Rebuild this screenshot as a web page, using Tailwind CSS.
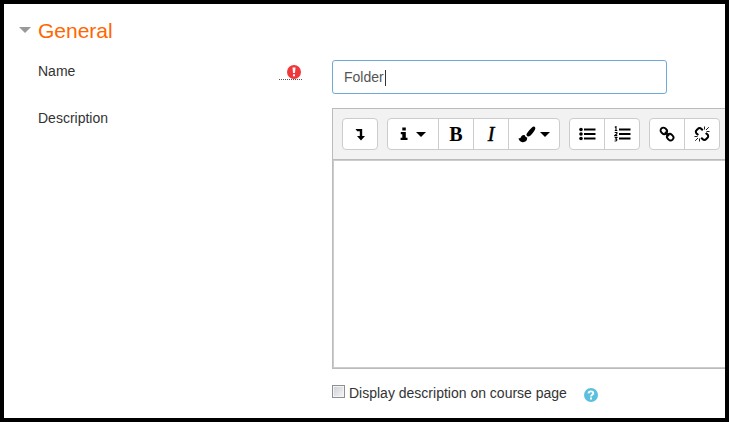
<!DOCTYPE html>
<html lang="en">
<head>
  <meta charset="UTF-8" />
  <meta name="viewport" content="width=device-width, initial-scale=1" />
  <title>Folder settings</title>
  <script src="https://cdn.jsdelivr.net/npm/@tailwindcss/browser@4"></script>
</head>
<body class="min-h-screen border-4 border-black bg-white pt-3 font-['Liberation_Sans',Arial,sans-serif] text-sm text-[#333] overflow-hidden">
  <form>
    <!-- Section header -->
    <h2>
      <button type="button" aria-expanded="true" class="flex items-center gap-[7px] pl-[15px] text-[21px] leading-[30px] text-[#ff6600]">
        <svg class="w-3 h-[30px]" viewBox="0 0 12 30" aria-hidden="true"><path d="M0 11h12l-6 6z" fill="#999" /></svg>
        General
      </button>
    </h2>

    <div class="mt-3.5 flex flex-col gap-3.5 pl-[34px]">
      <!-- Name -->
      <div class="flex">
        <div class="flex w-[294px] shrink-0 items-start justify-between pr-[30px] pt-px">
          <label for="name" class="leading-5">Name</label>
          <span class="mt-1 flex h-[15px] w-[23px] justify-end border-b border-dotted border-[#555]" title="Required">
            <svg class="size-[14px] mr-px" viewBox="0 0 14 14" aria-hidden="true">
              <circle cx="7" cy="7" r="7" fill="#f0383a" />
              <path d="M5.500 2.400h3L8 8H6zM6 9.200h2v2H6z" fill="#fff" />
            </svg>
          </span>
        </div>
        <div class="relative w-[335px]">
          <input id="name" type="text" value="Folder" class="block h-[34px] w-full rounded-[3px] border border-[#6fa9d8] px-[11px] text-sm text-[#555] outline-none" />
          <span class="absolute left-[53px] top-2.5 h-4 w-px bg-[#333]"></span>
        </div>
      </div>

      <!-- Description -->
      <div class="flex">
        <label for="description" class="w-[294px] shrink-0 leading-5">Description</label>
        <div class="min-w-0 grow border border-r-0 border-[#bbb]">
          <div class="flex gap-[9px] border-b border-[#bbb] bg-[#f2f2f2] p-[9px] pr-1 text-black">
            <button type="button" aria-label="Show more buttons" class="flex h-8 w-9 items-center justify-center rounded border border-[#ccc] bg-white">
              <svg class="size-4" viewBox="0 0 16 16" fill="currentColor"><path d="M3.500 3h6.700v7H13l-4 4.500L5 10h2.800V5.200H5.200z" /></svg>
            </button>

            <div class="flex h-8 divide-x divide-[#ccc] rounded border border-[#ccc] bg-white">
              <button type="button" aria-label="Paragraph styles" class="flex w-[51px] items-center justify-center gap-2">
                <svg class="h-4 w-2" viewBox="0 0 8 16" fill="currentColor"><path d="M2.300 1.500h3.500v3H2.300zM.8 6h5v5.800h1.700V14H.6v-2.200h1.700V8.200H.8z" /></svg>
                <svg class="h-4 w-[10px]" viewBox="0 0 10 16" fill="currentColor"><path d="M0 6h10l-5 5z" /></svg>
              </button>
              <button type="button" aria-label="Bold" class="flex w-[35px] items-center justify-center font-['Liberation_Serif',serif] text-xl font-bold">B</button>
              <button type="button" aria-label="Italic" class="flex w-[35px] items-center justify-center font-['Liberation_Serif',serif] text-xl font-medium italic">
                <span class="[-webkit-text-stroke:0.5px_black]">I</span>
              </button>
              <button type="button" aria-label="Font color" class="flex w-[50px] items-center justify-center gap-1">
                <svg class="h-[17px] w-[18px]" viewBox="0 0 17 17" fill="currentColor">
                  <path d="M16 .7c1 .7 1 1.900.4 3-1.300 2.400-2.800 4.300-4.700 6-1 .8-1.900 1-2.800.5-1-.6-1.200-1.700-.6-2.700C9.800 5.300 11.500 3.200 13.700 1.200 14.500.5 15.300.2 16 .7z" />
                  <path d="M6.200 9.200c.5 1.300 1.200 2 2.500 2.300.2 2.900-1.700 5-4.700 4.700C1.900 16 .5 14.300 0 12.200c.7.200 1.400.2 1.900-.2.500-.5.600-1.200 1.200-1.900.8-.9 1.900-1.200 3.100-.9z" />
                </svg>
                <svg class="h-4 w-[10px]" viewBox="0 0 10 16" fill="currentColor"><path d="M0 6h10l-5 5z" /></svg>
              </button>
            </div>

            <div class="flex h-8 divide-x divide-[#ccc] rounded border border-[#ccc] bg-white">
              <button type="button" aria-label="Unordered list" class="flex w-[35px] items-center justify-center">
                <svg class="h-4 w-[17px]" viewBox="0 0 17 16" fill="currentColor">
                  <circle cx="2" cy="3.500" r="1.800" /><circle cx="2" cy="8" r="1.800" /><circle cx="2" cy="12.500" r="1.800" />
                  <path d="M5 2.500h11.500v2H5zM5 7h11.500v2H5zM5 11.500h11.500v2H5z" />
                </svg>
              </button>
              <button type="button" aria-label="Ordered list" class="flex w-[34px] items-center justify-center">
                <svg class="h-4 w-[17px]" viewBox="0 0 17 16" fill="currentColor">
                  <path d="M5 2.500h11.500v2H5zM5 7h11.500v2H5zM5 11.500h11.500v2H5z" />
                  <path d="M.8 1.400 2 .6v3.800M.8 4.500h2.500M.7 6.500h2.200v1.200L.8 9.600h2.500M.7 11.500h2.200L1.700 13c1.700 0 1.700 2.300-1.100 2" fill="none" stroke="currentColor" stroke-width="1.100" />
                </svg>
              </button>
            </div>

            <div class="flex h-8 divide-x divide-[#ccc] rounded border border-[#ccc] bg-white">
              <button type="button" aria-label="Link" class="flex w-[35px] items-center justify-center">
                <svg class="size-4" viewBox="0 0 16 16" fill="none" stroke="currentColor" stroke-width="1.900">
                  <rect x="1.400" y="2" width="6.800" height="5.600" rx="2.800" transform="rotate(45 4.800 4.800)" />
                  <rect x="7.800" y="8.400" width="6.800" height="5.600" rx="2.800" transform="rotate(45 11.200 11.200)" />
                  <path d="m6 6 4 4" />
                </svg>
              </button>
              <button type="button" aria-label="Unlink" class="flex w-[34px] items-center justify-center">
                <svg class="size-4" viewBox="0 0 16 16" fill="none" stroke="currentColor">
                  <path d="M8.800 4.300 7.200 2.700a2.200 2.200 0 0 0-3.200 0L2.500 4.200a2.200 2.200 0 0 0 0 3.200l1.800 1.700M7.200 11.700l1.600 1.600a2.200 2.200 0 0 0 3.200 0l1.500-1.500a2.200 2.200 0 0 0 0-3.200l-1.800-1.700" stroke-width="2" />
                  <path d="M10.500.5v3M12 4l2.800-2.800M12.500 5.500h3M5.500 12.500v3M4 12l-2.800 2.800M.5 10.500h3" stroke-width=".9" />
                </svg>
              </button>
            </div>
          </div>
          <textarea id="description" class="block h-[208px] w-full resize-none border border-r-0 border-[#ccc] bg-white p-2 outline-none"></textarea>
        </div>
      </div>

      <!-- Display option -->
      <div class="ml-[294px] flex items-start">
        <input id="showdescription" type="checkbox" class="mt-0.5 size-[13px] shrink-0 appearance-none border border-[#8e8f8f] bg-linear-to-br from-[#cbcfd5] to-[#f6f6f6] shadow-[inset_0_0_0_1px_#f4f4f4] checked:bg-[#4b6097]" />
        <label for="showdescription" class="ml-1 leading-5">Display description on course page</label>
        <button type="button" aria-label="Help" class="ml-[17px] mt-[5px]">
          <svg class="size-[14px]" viewBox="0 0 14 14" aria-hidden="true">
            <circle cx="7" cy="7" r="7" fill="#5bc0de" />
            <path d="M4.500 5.400C4.700 2.700 9.300 2.700 9.300 5.200 9.300 6.800 7 6.800 7 8.400" fill="none" stroke="#fff" stroke-width="1.900" />
            <path d="M6 9.400h2v2H6z" fill="#fff" />
          </svg>
        </button>
      </div>
    </div>
  </form>
</body>
</html>
